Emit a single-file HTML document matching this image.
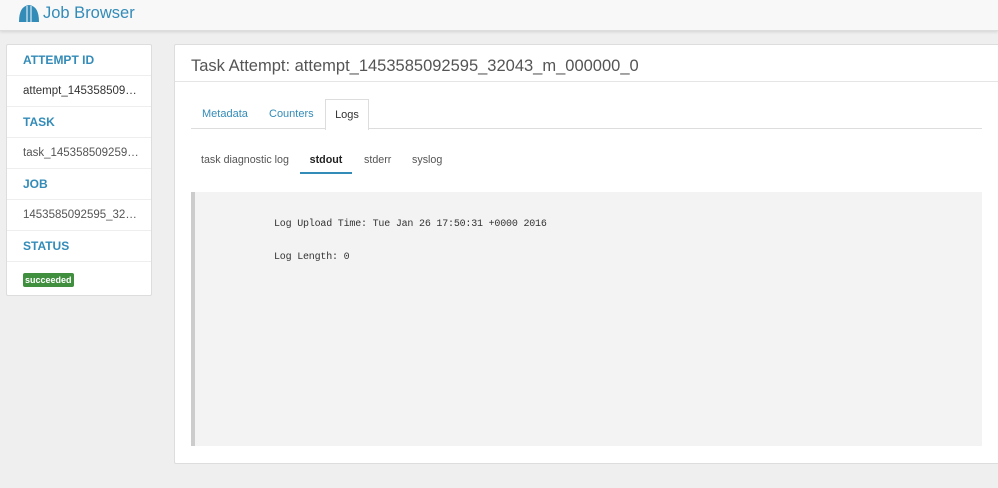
<!DOCTYPE html>
<html><head><style>
body{margin:0;width:998px;height:488px;background:#efefef;font-family:"Liberation Sans",sans-serif;position:relative;overflow:hidden}
.hdr{position:absolute;left:0;top:0;width:998px;height:30px;background:#f8f8f8;border-bottom:1px solid #ddd;box-shadow:0 1px 3px rgba(0,0,0,.12)}
.hdr span{position:absolute;left:43px;top:4px;font-size:16.5px;color:#338bb8}
.side{position:absolute;left:6px;top:44px;width:144px;height:250px;background:#fff;border:1px solid #ddd;border-radius:2px}
.row{height:31px;border-bottom:1px solid #eee;box-sizing:border-box;padding-left:16px;line-height:31px;font-size:11.5px;color:#333;white-space:nowrap;overflow:hidden}
.row.h{color:#338bb8;font-weight:bold;font-size:12px}
.badge{display:inline-block;background:#3f8f3f;color:#fff;font-size:9px;font-weight:bold;padding:0 2px;line-height:14px;border-radius:2px;vertical-align:middle;position:relative;top:3px}
.main{position:absolute;left:174px;top:44px;width:830px;height:418px;background:#fff;border:1px solid #ddd;border-radius:2px}
.title{height:36px;border-bottom:1px solid #e5e5e5;font-size:16.5px;color:#555;padding-left:16px;line-height:42px}
.tabs{position:absolute;left:16px;top:54px;width:791px;height:29px;border-bottom:1px solid #ddd}
.tab{position:absolute;top:0;height:30px;line-height:30px;font-size:11px;color:#338bb8}
.sub{position:absolute;top:109px;font-size:10.7px;color:#555}
.log{position:absolute;left:16px;top:147px;width:787px;height:254px;background:#f3f3f3;border-left:4px solid #ccc;font-family:"Liberation Mono",monospace;font-size:10px;letter-spacing:-0.2px;color:#333}
.log div{position:absolute;left:79px}
</style></head><body>
<div class="hdr"><svg style="position:absolute;left:18px;top:3px" width="22" height="22" viewBox="0 0 22 22"><path d="M1 19 Q1 3 11 2 Q21 3 21 19 Z" fill="#338bb8"/><path d="M9 3V19M13 3V19" stroke="#fff" stroke-width="1"/></svg><span>Job Browser</span></div>
<div class="side">
<div class="row h">ATTEMPT ID</div>
<div class="row">attempt_145358509…</div>
<div class="row h">TASK</div>
<div class="row" style="color:#555">task_145358509259…</div>
<div class="row h">JOB</div>
<div class="row" style="color:#555">1453585092595_32…</div>
<div class="row h">STATUS</div>
<div class="row" style="border:none"><span class="badge">succeeded</span></div>
</div>
<div class="main">
<div class="title">Task Attempt: attempt_1453585092595_32043_m_000000_0</div>
<div class="tabs">
<div class="tab" style="left:11px">Metadata</div>
<div class="tab" style="left:78px">Counters</div>
<div class="tab" style="left:134px;width:44px;height:31px;background:#fff;border:1px solid #ddd;border-bottom:none;box-sizing:border-box;text-align:center;color:#333;top:0">Logs</div>
</div>
<div class="sub" style="left:26px">task diagnostic log</div>
<div class="sub" style="left:125px;width:52px;text-align:center;font-weight:bold;color:#222;height:18px;border-bottom:2px solid #338bb8">stdout</div>
<div class="sub" style="left:189px">stderr</div>
<div class="sub" style="left:237px">syslog</div>
<div class="log"><div style="top:27px">Log Upload Time: Tue Jan 26 17:50:31 +0000 2016</div><div style="top:60px">Log Length: 0</div></div>
</div>
</body></html>
